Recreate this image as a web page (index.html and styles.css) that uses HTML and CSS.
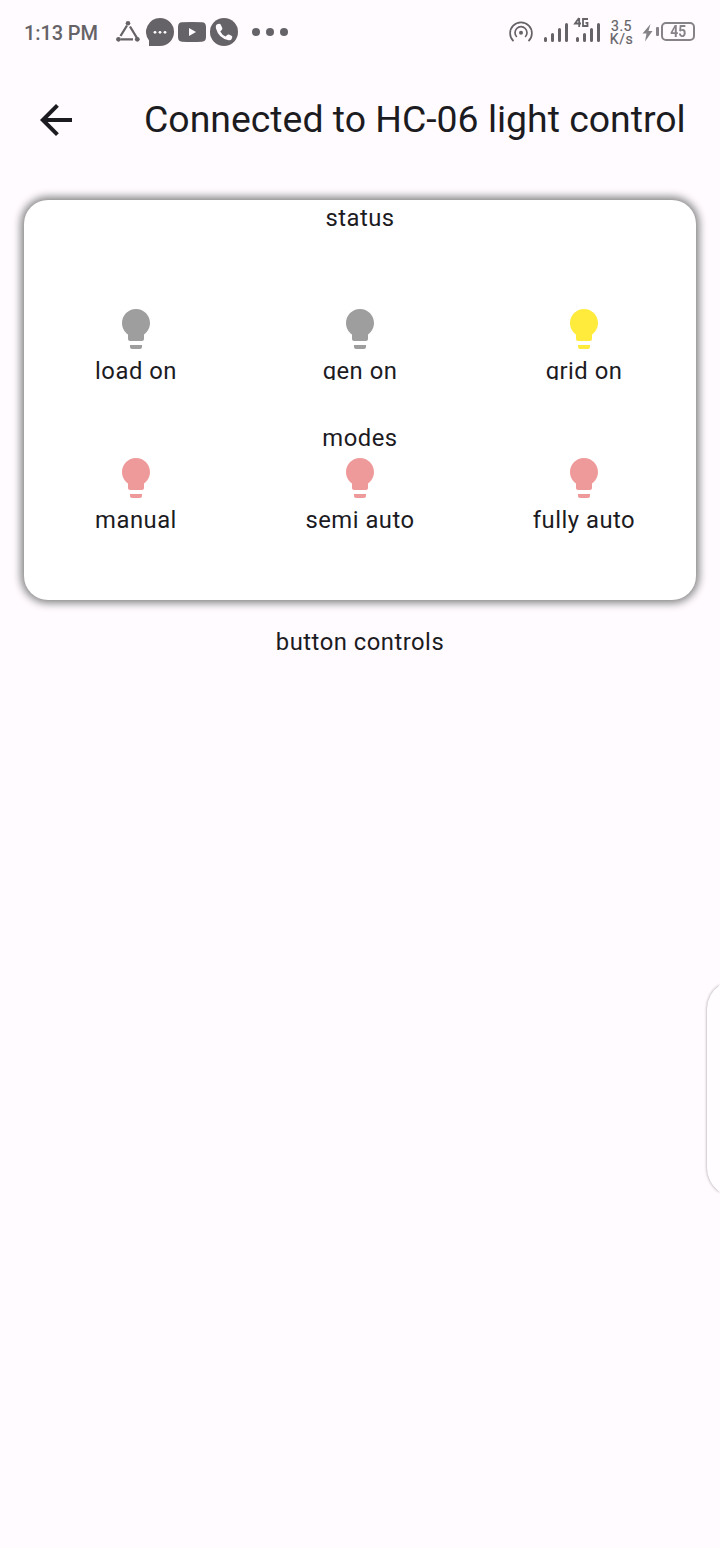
FILE: index.html
```
<!DOCTYPE html>
<html lang="en">
<head>
<meta charset="utf-8">
<title>Light control</title>
<link rel="stylesheet" href="styles.css">
</head>
<body>
<svg class="defs" aria-hidden="true"><symbol id="bulb" viewBox="0 0 24 24"><path d="M9 21c0 .55.45 1 1 1h4c.55 0 1-.45 1-1v-1H9v1zm3-19C8.14 2 5 5.14 5 9c0 2.38 1.19 4.47 3 5.74V17c0 .55.45 1 1 1h6c.55 0 1-.45 1-1v-2.26c1.81-1.27 3-3.36 3-5.74 0-3.86-3.14-7-7-7z"/></symbol></svg>
<header class="statusbar">
  <div class="left">
    <span class="clock">1:13 PM</span>
    <svg class="notes" viewBox="114 16 180 32" width="180" height="32">
      <g fill="none" stroke="#656367" stroke-width="2.3"><path d="M127 25.500L120.500 36M130 26.500L137 38M121 39.300H133"/></g>
      <g fill="#656367"><circle cx="128" cy="23.200" r="2.300"/><circle cx="118.500" cy="39.300" r="2.400"/><circle cx="137.300" cy="39.300" r="2.400"/>
      <path d="M160 18a14 14 0 1 1 0 28H149V40.500A14 14 0 0 1 160 18z"/>
      <path d="M182 22.300Q192 21.700 202 22.300Q206 22.500 206 27V37Q206 41.500 202 41.700Q192 42.300 182 41.700Q178 41.500 178 37V27Q178 22.500 182 22.300z"/>
      <circle cx="224" cy="32" r="14"/>
      <circle cx="256" cy="32" r="4"/><circle cx="270" cy="32" r="4"/><circle cx="284" cy="32" r="4"/></g>
      <g fill="#fffbff"><circle cx="155" cy="32.300" r="1.400"/><circle cx="160" cy="32.300" r="1.400"/><circle cx="165" cy="32.300" r="1.400"/>
      <path d="M189 28v8l7-4z"/>
      <path d="M217.300 24.200L219 23.700Q220.200 23.600 220.800 24.800L222.300 28Q222.600 29.100 221.700 30L220.300 31.400Q222 35 225.700 36.400L227.100 35Q228 34.200 229 34.600L231.500 35.700Q232.600 36.200 232.200 37.400L231.500 39.200Q230.900 40.500 228.700 40.200Q218.700 38.500 216 28.500Q215.300 25 217.300 24.200z"/></g>
    </svg>
  </div>
  <div class="right">
    <svg class="signals" viewBox="506 14 98 32" width="98" height="32">
      <g fill="none" stroke="#656367" stroke-width="1.700"><path d="M513.500 41.200A10.900 10.900 0 1 1 528.500 41.200M516.800 37A6 6 0 1 1 525.200 37"/></g>
      <circle cx="521" cy="32.800" r="2" fill="#656367"/>
      <path d="M545.500 38.500V40.500M552.500 34.500V40.500M559.500 29.500V40.500M566.500 24.500V40.500M577.500 38.500V40.500M584.500 34.500V40.500M591.500 29.500V40.500M598.500 24.500V40.500" stroke="#656367" stroke-width="3" stroke-linecap="round"/>
      <path d="M579 18L575 23.500H581M579.200 18V27M588 19H583V26H587.500V22.800H585.500" fill="none" stroke="#656367" stroke-width="1.800"/>
    </svg>
    <span class="speed">3.5<br>K/s</span>
    <svg class="bolt" viewBox="642 22 18 20" width="18" height="20"><path fill="#858387" d="M650.500 24L642.500 33.500H646.500L645 41.500L652.500 31H648.500z"/><rect x="656" y="27" width="3" height="9" rx="1" fill="#858387"/></svg>
    <span class="battery"><span>45</span></span>
  </div>
</header>
<nav class="appbar">
  <svg viewBox="0 0 24 24" width="48" height="48"><path fill="#1c1b1f" d="M20 11H7.830l5.590-5.590L12 4l-8 8 8 8 1.410-1.410L7.830 13H20v-2z"/></svg>
  <h1>Connected to HC-06 light control</h1>
</nav>
<main>
  <section class="card">
    <p>status</p>
    <div class="row first">
      <div class="item grey"><svg><use href="#bulb"/></svg><span>load on</span></div>
      <div class="item grey"><svg><use href="#bulb"/></svg><span>gen on</span></div>
      <div class="item yellow"><svg><use href="#bulb"/></svg><span>grid on</span></div>
    </div>
    <p>modes</p>
    <div class="row second">
      <div class="item red"><svg><use href="#bulb"/></svg><span>manual</span></div>
      <div class="item red"><svg><use href="#bulb"/></svg><span>semi auto</span></div>
      <div class="item red"><svg><use href="#bulb"/></svg><span>fully auto</span></div>
    </div>
  </section>
  <p class="caption">button controls</p>
</main>
<svg class="edge" viewBox="0 0 24 240" width="24" height="240"><path d="M24 17A30 30 0 0 0 11 41V197A30 30 0 0 0 24 224"/></svg>
</body>
</html>
```
FILE: styles.css
```
* { box-sizing: border-box; }
body {
  margin: 0;
  height: 1548px;
  position: relative;
  background: #fffbff;
  color: #1c1b1f;
  font: 23.8px/34px Roboto, sans-serif;
  letter-spacing: .5px;
}
p, h1 { margin: 0; font-weight: 400; }
.defs { position: absolute; width: 0; height: 0; }
.statusbar {
  height: 64px;
  padding: 0 25px 0 24px;
  display: flex;
  justify-content: space-between;
  color: #656367;
  letter-spacing: 0;
}
.left, .right { display: flex; }
.clock { width: 90px; font-size: 20px; line-height: 66px; font-weight: 500; letter-spacing: -.1px; white-space: nowrap; }
.notes { margin-top: 16px; }
.signals { margin-top: 14px; }
.speed {
  width: 34px;
  padding: 20px 0 0 1px;
  text-align: center;
  font-size: 14px;
  line-height: 13px;
  letter-spacing: .5px;
  -webkit-text-stroke: .2px;
}
.bolt { margin: 22px 1px 0 4px; }
.battery {
  width: 34px;
  height: 19px;
  margin-top: 22px;
  border: 2px solid #858387;
  border-radius: 5px;
  color: #858387;
  display: flex;
  align-items: center;
  justify-content: center;
  font-size: 16px;
  line-height: 15px;
  font-weight: 700;
}
.battery span { transform: scaleX(.87); }
.appbar { height: 112px; padding: 0 32px; display: flex; align-items: center; gap: 64px; }
.appbar h1 { padding-bottom: 2px; font-size: 37.4px; line-height: 48px; letter-spacing: 0; white-space: nowrap; }
main { padding: 24px 24px 0; text-align: center; }
.card {
  height: 400px;
  padding-top: 1px;
  background: #fff;
  border-radius: 24px;
  box-shadow: 0 0 8px 3px #808080;
}
.row { display: grid; grid-template-columns: repeat(3, 1fr); overflow: hidden; }
.first { height: 145px; padding-top: 70px; margin-bottom: 41px; }
.item { display: flex; flex-direction: column; align-items: center; }
.item svg { width: 48px; height: 48px; margin-bottom: 1px; flex: none; }
.grey svg { fill: #9e9e9e; }
.yellow svg { fill: #ffeb3b; }
.red svg { fill: #ef9a9a; }
.second { margin-top: -1px; }
.caption { margin-top: 25px; }
.edge {
  position: absolute;
  right: 0;
  top: 968px;
  fill: #fffdff;
  filter: drop-shadow(0 0 1.5px rgba(0, 0, 0, .4));
}
```
